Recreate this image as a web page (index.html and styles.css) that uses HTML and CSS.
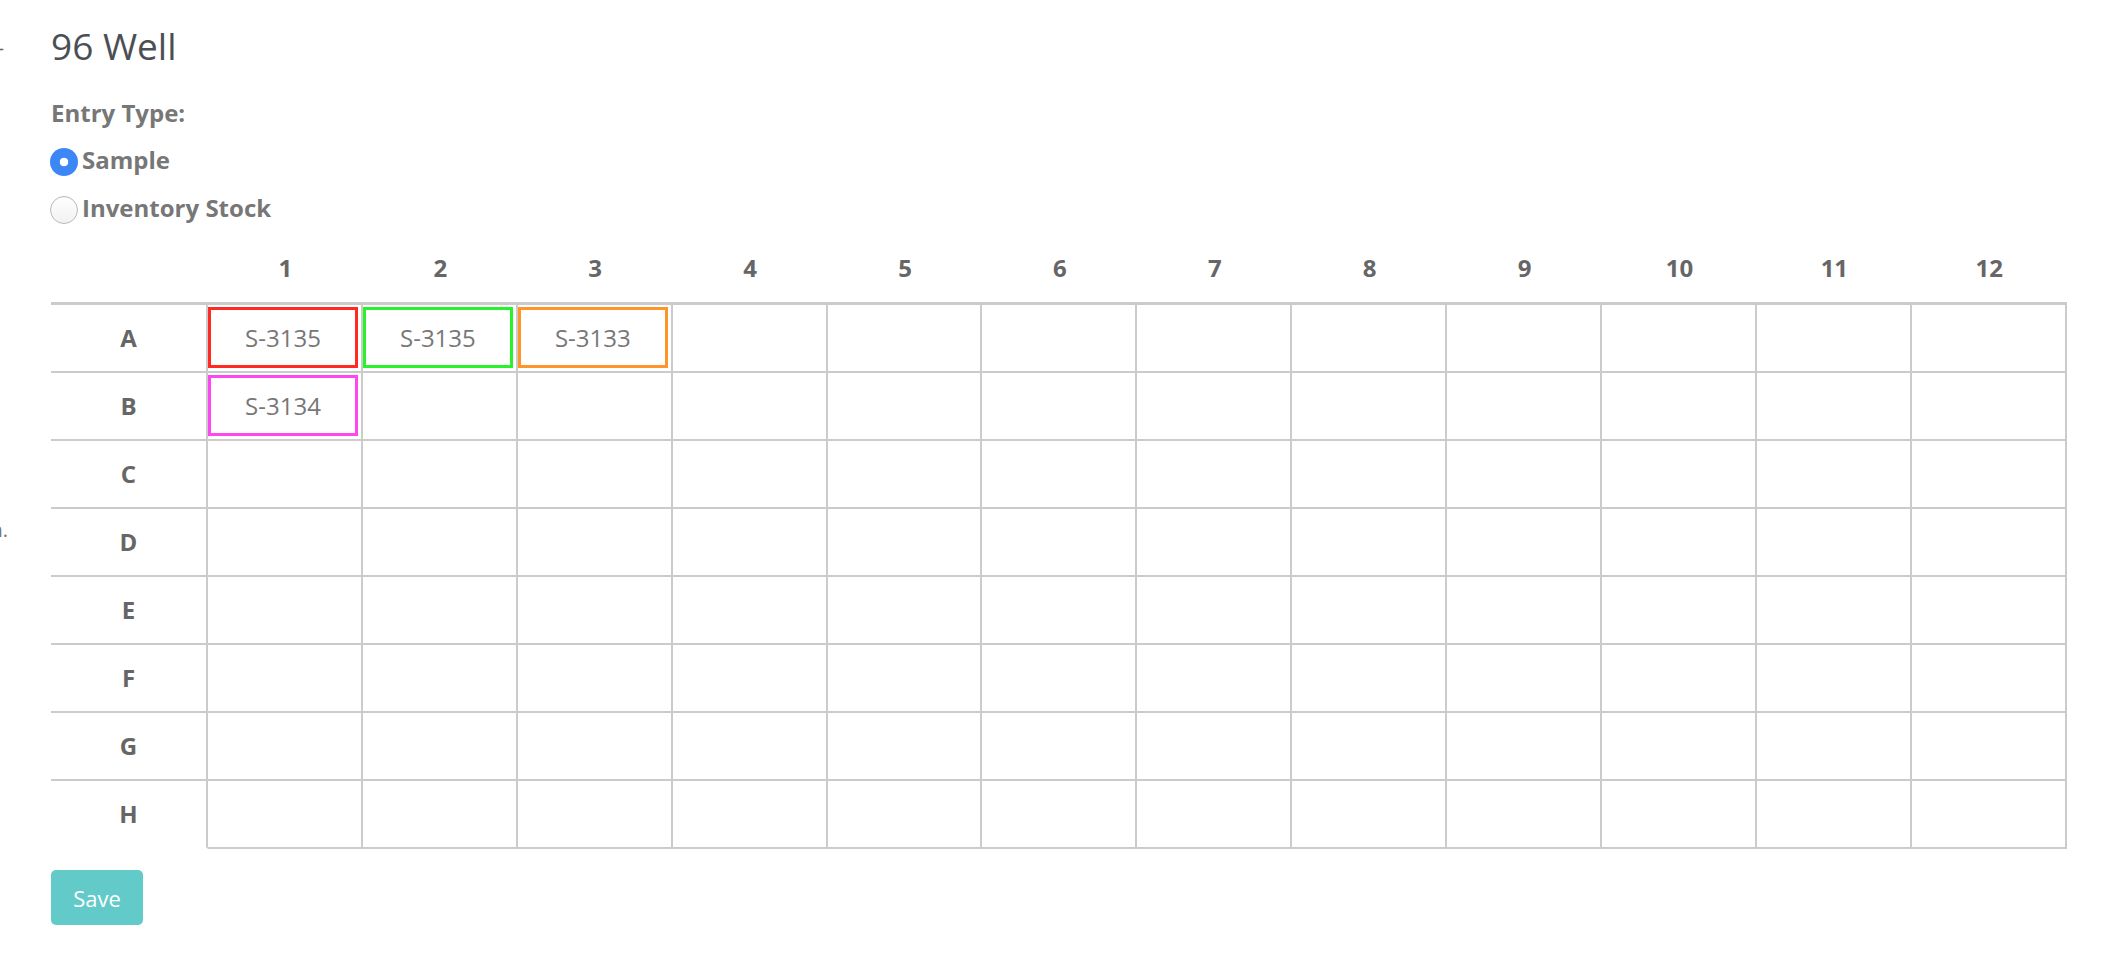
FILE: index.html
```html
<!DOCTYPE html>
<html lang="en">
<head>
<meta charset="utf-8">
<title>96 Well</title>
<link rel="stylesheet" href="styles.css">
</head>
<body>
<div class="peek peek-top"><span>—</span></div>
<div class="peek peek-mid"><span>n.</span></div>
<main class="panel">
  <h1 class="title">96 Well</h1>
  <div class="entry">
    <div class="entry-label">Entry Type:</div>
    <label class="opt opt-first"><input type="radio" name="entry" checked><span>Sample</span></label>
    <label class="opt"><input type="radio" name="entry"><span>Inventory Stock</span></label>
  </div>
  <div class="plate">
    <div class="hcell"></div>
    <div class="hcell">1</div><div class="hcell">2</div><div class="hcell">3</div><div class="hcell">4</div>
    <div class="hcell">5</div><div class="hcell">6</div><div class="hcell">7</div><div class="hcell">8</div>
    <div class="hcell">9</div><div class="hcell">10</div><div class="hcell">11</div><div class="hcell">12</div>

    <div class="rlabel">A</div>
    <div class="well"><div class="tube tube-red">S-3135</div></div>
    <div class="well"><div class="tube tube-green">S-3135</div></div>
    <div class="well"><div class="tube tube-orange">S-3133</div></div>
    <div class="well"></div><div class="well"></div><div class="well"></div><div class="well"></div><div class="well"></div><div class="well"></div><div class="well"></div><div class="well"></div><div class="well"></div>

    <div class="rlabel">B</div>
    <div class="well"><div class="tube tube-magenta">S-3134</div></div>
    <div class="well"></div><div class="well"></div><div class="well"></div><div class="well"></div><div class="well"></div><div class="well"></div><div class="well"></div><div class="well"></div><div class="well"></div><div class="well"></div><div class="well"></div>

    <div class="rlabel">C</div>
    <div class="well"></div><div class="well"></div><div class="well"></div><div class="well"></div><div class="well"></div><div class="well"></div><div class="well"></div><div class="well"></div><div class="well"></div><div class="well"></div><div class="well"></div><div class="well"></div>

    <div class="rlabel">D</div>
    <div class="well"></div><div class="well"></div><div class="well"></div><div class="well"></div><div class="well"></div><div class="well"></div><div class="well"></div><div class="well"></div><div class="well"></div><div class="well"></div><div class="well"></div><div class="well"></div>

    <div class="rlabel">E</div>
    <div class="well"></div><div class="well"></div><div class="well"></div><div class="well"></div><div class="well"></div><div class="well"></div><div class="well"></div><div class="well"></div><div class="well"></div><div class="well"></div><div class="well"></div><div class="well"></div>

    <div class="rlabel">F</div>
    <div class="well"></div><div class="well"></div><div class="well"></div><div class="well"></div><div class="well"></div><div class="well"></div><div class="well"></div><div class="well"></div><div class="well"></div><div class="well"></div><div class="well"></div><div class="well"></div>

    <div class="rlabel">G</div>
    <div class="well"></div><div class="well"></div><div class="well"></div><div class="well"></div><div class="well"></div><div class="well"></div><div class="well"></div><div class="well"></div><div class="well"></div><div class="well"></div><div class="well"></div><div class="well"></div>

    <div class="rlabel rlabel-last">H</div>
    <div class="well"></div><div class="well"></div><div class="well"></div><div class="well"></div><div class="well"></div><div class="well"></div><div class="well"></div><div class="well"></div><div class="well"></div><div class="well"></div><div class="well"></div><div class="well"></div>
  </div>
  <button class="save" type="button">Save</button>
</main>
</body>
</html>
```

FILE: styles.css
```css
* { box-sizing: border-box; }

body {
  margin: 0;
  background: #fff;
  font-family: "Open Sans", "Liberation Sans", sans-serif;
  color: #777;
}

.peek {
  position: absolute;
  left: 0;
  overflow: hidden;
  display: flex;
  justify-content: flex-end;
  white-space: nowrap;
  font-size: 20px;
  line-height: 24px;
}
.peek-top { top: 36px; width: 4px; color: #666; }
.peek-mid { top: 518px; width: 8px; color: #777; }

.panel {
  padding: 24px 0 40px 51px;
}

.title {
  margin: 0;
  font-size: 37px;
  font-weight: 400;
  line-height: 44px;
  color: #4b4f54;
}

.entry {
  margin-top: 29px;
}

.entry-label {
  font-size: 24px;
  font-weight: 700;
  line-height: 32px;
  color: #777;
}

.opt {
  display: flex;
  align-items: center;
  gap: 4px;
  height: 32px;
  margin-top: 16px;
  font-size: 24px;
  font-weight: 700;
  line-height: 32px;
  color: #777;
}
.opt-first { margin-top: 17px; }
.opt span { margin-bottom: 4px; }

.opt input {
  -webkit-appearance: none;
  appearance: none;
  margin: 0 0 0 -1px;
  width: 28px;
  height: 28px;
  border-radius: 50%;
  border: 1px solid #b9b9b9;
  background: linear-gradient(#ffffff, #f1f1f1);
  box-shadow: inset 0 1px 1px rgba(0,0,0,0.04);
  flex: none;
}
.opt input:checked {
  border: none;
  background: radial-gradient(circle, #fff 0 4px, #3c87f6 4.6px);
  box-shadow: none;
}

.plate {
  display: grid;
  grid-template-columns: 157px repeat(12, 154.9px);
  width: 2016px;
  margin-top: 8px;
}

.hcell {
  height: 71px;
  padding-bottom: 1px;
  border-bottom: 3px solid #cbcbcb;
  display: flex;
  align-items: center;
  justify-content: center;
  font-size: 24px;
  font-weight: 700;
  line-height: 32px;
  color: #666;
}

.rlabel {
  height: 68px;
  border-right: 2px solid #cbcbcb;
  border-bottom: 2px solid #cbcbcb;
  display: flex;
  align-items: center;
  justify-content: center;
  font-size: 24px;
  font-weight: 700;
  line-height: 32px;
  color: #666;
}
.rlabel-last { border-bottom-color: transparent; }

.well {
  height: 68px;
  padding-top: 2px;
  border-right: 2px solid #cbcbcb;
  border-bottom: 2px solid #cbcbcb;
}

.tube {
  width: 150px;
  height: 61px;
  border: 3px solid #ccc;
  display: flex;
  align-items: center;
  justify-content: center;
  font-size: 24px;
  font-weight: 400;
  line-height: 32px;
  color: #777;
}
.tube-red { border-color: #ff2b22; }
.tube-green { border-color: #27f22a; }
.tube-orange { border-color: #ff9529; }
.tube-magenta { border-color: #ff47f1; }

.save {
  display: block;
  margin-top: 21px;
  width: 92px;
  height: 55px;
  border: none;
  border-radius: 5px;
  background: #62cac8;
  color: #fff;
  font-family: "Open Sans", "Liberation Sans", sans-serif;
  font-size: 22px;
  font-weight: 400;
  padding: 0;
}
```
